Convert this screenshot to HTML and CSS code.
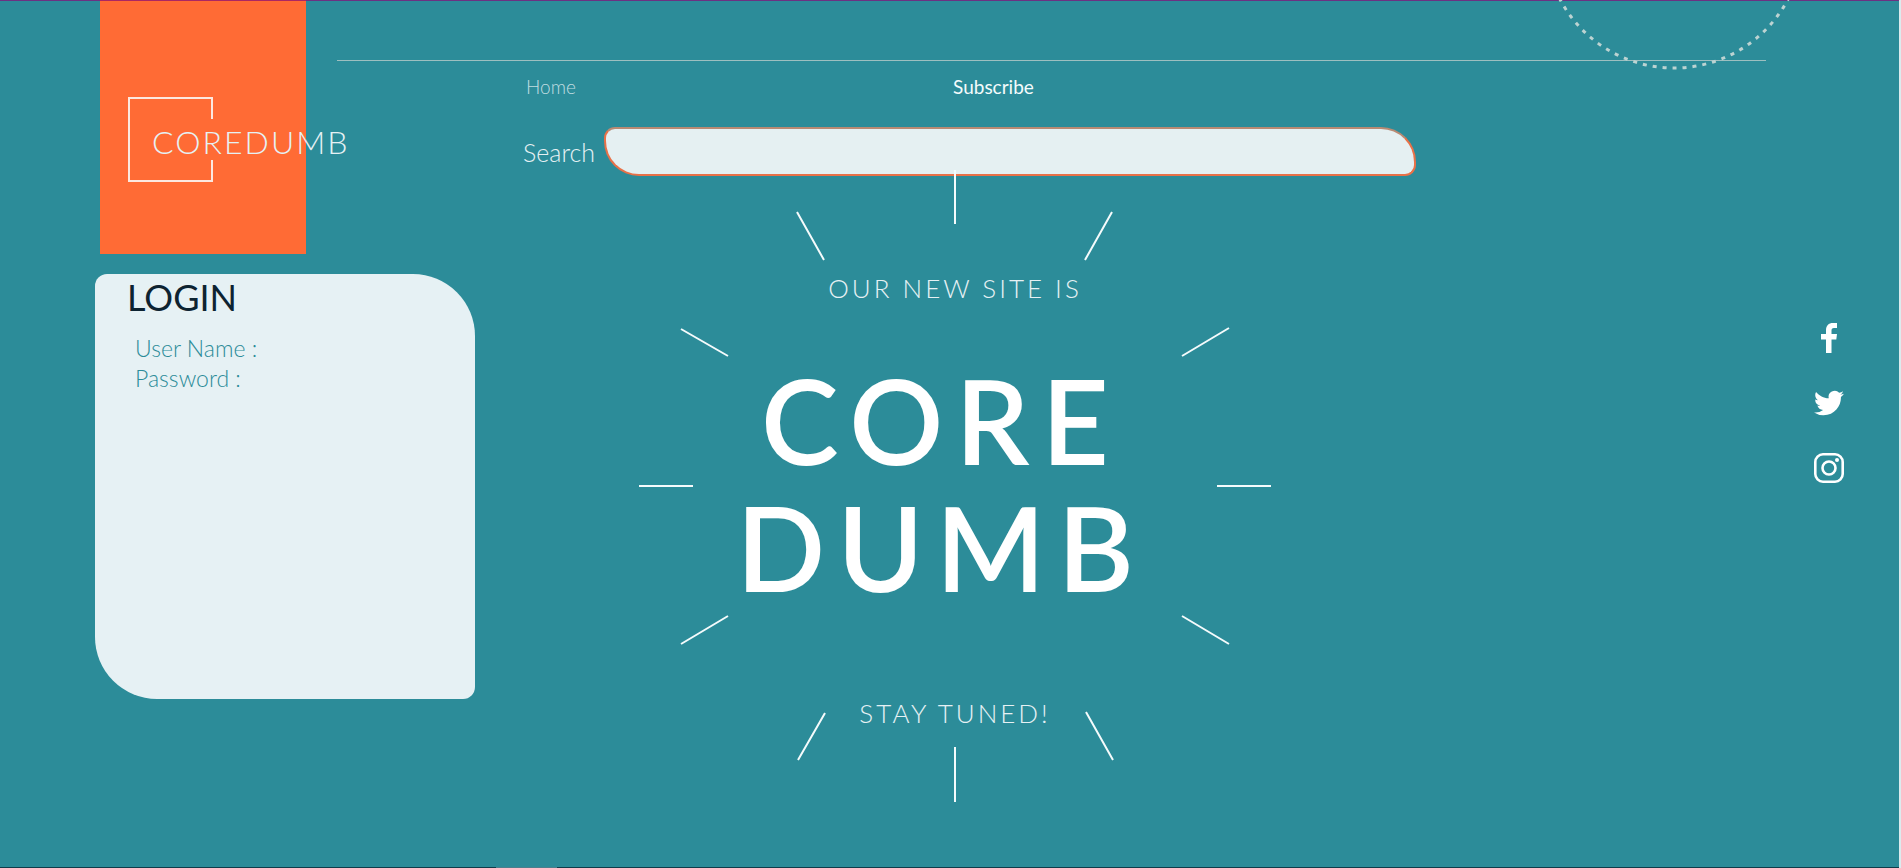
FILE: index.html
```html
<!DOCTYPE html>
<html lang="en">
<head>
<meta charset="utf-8">
<title>Coredumb</title>
<link rel="stylesheet" href="styles.css">
</head>
<body>
<div class="page">
  <svg class="ring" viewBox="0 0 264 264" aria-hidden="true"><circle cx="132" cy="132" r="129"/></svg>

  <aside class="sidebar">
    <a class="brand" href="#">
      <svg class="brand-frame" viewBox="0 0 86 86" aria-hidden="true"><path d="M84 22V1H1v83h83V63"/></svg>
      <span class="brand-name">COREDUMB</span>
    </a>
    <form class="login">
      <h2 class="login-title">LOGIN</h2>
      <div class="login-row">
        <label for="user">User Name :</label>
        <input id="user" type="text">
      </div>
      <div class="login-row">
        <label for="pass">Password :</label>
        <input id="pass" type="password">
      </div>
    </form>
  </aside>

  <hr class="rule">

  <main class="content">
    <nav class="nav">
      <a class="nav-link nav-link-current" href="#">Home</a>
      <a class="nav-link" href="#">Subscribe</a>
    </nav>
    <form class="search">
      <label for="search">Search</label>
      <input id="search" type="text">
    </form>
    <section class="hero">
      <svg class="rays" viewBox="0 0 632 632" aria-hidden="true">
        <path d="M316 0v54M158 42l27 48M473 42l-27 48M42 159l47 27M590 158l-47 28M0 316h54M578 316h54M89 446l-47 28M543 446l47 28M186 543l-27 47M447 542l27 48M316 577v55"/>
      </svg>
      <div class="hero-text">
        <p class="hero-line">OUR NEW SITE IS</p>
        <h1 class="hero-title"><span>CORE</span> <span>DUMB</span></h1>
        <p class="hero-line">STAY TUNED!</p>
      </div>
    </section>
  </main>

  <nav class="social" aria-label="Social">
    <a href="#" aria-label="Facebook"><svg viewBox="0 0 30 30"><path d="M12 30V16.500H7v-5.500h5V7.500C12 2.500 14.500 0 19 0h4v5h-3c-2 0-2.500 1-2.500 2.500V11H23l-.7 5.500h-4.800V30z"/></svg></a>
    <a href="#" aria-label="Twitter"><svg viewBox="0 0 24 24"><path d="M23.950 4.570a10 10 0 0 1-2.820.770 4.960 4.960 0 0 0 2.160-2.720c-.95.550-2 .95-3.130 1.180a4.920 4.920 0 0 0-8.380 4.480C7.690 8.090 4.070 6.130 1.640 3.160a4.820 4.820 0 0 0-.67 2.480c0 1.710.87 3.210 2.190 4.100a4.900 4.900 0 0 1-2.230-.62v.06a4.920 4.920 0 0 0 3.950 4.830 5 5 0 0 1-2.210.08 4.940 4.940 0 0 0 4.600 3.420A9.870 9.870 0 0 1 0 19.540a14 14 0 0 0 7.550 2.210c9.050 0 14-7.500 14-13.980 0-.21 0-.42-.02-.63a9.940 9.940 0 0 0 2.460-2.550z"/></svg></a>
    <a href="#" aria-label="Instagram"><svg viewBox="0 0 30 30"><path class="outline" d="M9 1.300h12a7.700 7.700 0 0 1 7.700 7.700v12a7.700 7.700 0 0 1-7.700 7.700H9A7.700 7.700 0 0 1 1.300 21V9A7.700 7.700 0 0 1 9 1.300zM15 8.500a6.500 6.500 0 1 0 0 13 6.500 6.500 0 1 0 0-13z" stroke-width="2.600"/><circle cx="23" cy="7" r="2"/></svg></a>
  </nav>
</div>
</body>
</html>
```
FILE: styles.css
```css
* { box-sizing: border-box; }

body {
  margin: 0;
  background: #2c8c99;
  color: #e6f1f4;
  font-family: Lato, "Open Sans", sans-serif;
  font-weight: 300;
}

h1, h2, p { margin: 0; font-weight: inherit; }

a { color: inherit; text-decoration: none; }

.page {
  position: relative;
  display: grid;
  grid-template-columns: 242px 138px 1fr 133px;
  grid-template-rows: 61px auto;
  min-height: 100vh;
  padding-left: 5vw;
  overflow: hidden;
  border-right: 2px solid #dcebee;
}

.page::before,
.page::after {
  content: "";
  position: absolute;
  left: 0;
  right: 0;
  height: 1px;
}

.page::before { top: 0; background: rgba(135, 10, 120, 0.7); }

.page::after {
  bottom: 0;
  background: linear-gradient(90deg, #0e3c4a 496px, #4c7f8d 496px, #4c7f8d 557px, #0e3c4a 557px);
}

.ring {
  position: absolute;
  top: -193px;
  right: 93px;
  width: 264px;
  fill: none;
  stroke: #bcd3d2;
  stroke-width: 3;
  stroke-dasharray: 4 6;
}

.sidebar {
  grid-column: 1 / 3;
  grid-row: 1 / 3;
}

.brand {
  display: grid;
  width: 206px;
  height: 254px;
  margin-left: 5px;
  padding: 97px 0 0 28px;
  background: #ff6b35;
  align-content: start;
}

.brand-frame {
  grid-area: 1 / 1;
  width: 86px;
  height: 86px;
  fill: none;
  stroke: #fce8df;
  stroke-width: 2;
}

.brand-name {
  grid-area: 1 / 1;
  align-self: center;
  padding: 4px 0 0 24px;
  font-size: 32px;
  line-height: 38px;
  letter-spacing: 2px;
  white-space: nowrap;
}

.login {
  min-height: 425px;
  margin-top: 20px;
  padding: 4px 32px;
  border-radius: 12px 62px;
  background: #e6f1f4;
  color: #2c8c99;
}

.login-title {
  color: #0d2331;
  font-size: 36px;
  font-weight: 400;
  line-height: 38px;
}

.login-row {
  display: flex;
  gap: 8px;
  padding-left: 8px;
  font-size: 23px;
  line-height: 30px;
}

.login-title + .login-row { margin-top: 17px; }

.login-row input {
  flex: 1;
  min-width: 0;
  padding: 0;
  border: 0;
  outline: 0;
  background: transparent;
  color: inherit;
  font: inherit;
}

.rule {
  grid-column: 2 / 4;
  grid-row: 1;
  align-self: end;
  width: 100%;
  height: 1px;
  margin: 0;
  border: 0;
  background: #9dbfc0;
}

.content {
  grid-column: 3;
  grid-row: 2;
  padding-top: 13px;
}

.nav {
  display: grid;
  grid-template-columns: 427px 1fr;
  padding-left: 51px;
  font-size: 19px;
  line-height: 26px;
}

.nav-link { font-weight: 400; color: #f4fbfc; }

.nav-link-current { font-weight: 300; color: #c0dde1; }

.search {
  display: flex;
  align-items: center;
  gap: 9px;
  max-width: 941px;
  margin-top: 27px;
  padding-left: 48px;
  font-size: 25px;
}

.search input {
  flex: 1;
  min-width: 0;
  height: 49px;
  padding: 0 24px;
  border: 2px solid #e87148;
  border-top-color: #b98a73;
  border-radius: 11px 35px;
  outline: 0;
  background: #e5f0f2;
  font: inherit;
}

.hero {
  display: grid;
  width: 632px;
  margin: -6px 0 0 164px;
}

.rays {
  position: relative;
  grid-area: 1 / 1;
  width: 632px;
  height: 632px;
  fill: none;
  stroke: #f5fbfc;
  stroke-width: 2;
}

.hero-text {
  grid-area: 1 / 1;
  padding-top: 103px;
  text-align: center;
}

.hero-line {
  font-size: 26px;
  line-height: 30px;
  letter-spacing: 3px;
}

.hero-title {
  margin: 54px 0 87px;
  padding-right: 28px;
  color: #fff;
  font-size: 117px;
  font-weight: 600;
  line-height: 127px;
  letter-spacing: 12px;
}

.hero-title span { display: block; }

.social {
  grid-column: 4;
  grid-row: 2;
  display: flex;
  flex-direction: column;
  align-items: center;
  gap: 35px;
  padding: 262px 8px 0 0;
}

.social svg {
  display: block;
  width: 30px;
  height: 30px;
  fill: #fff;
}

.social .outline {
  fill: none;
  stroke: #fff;
}
```
